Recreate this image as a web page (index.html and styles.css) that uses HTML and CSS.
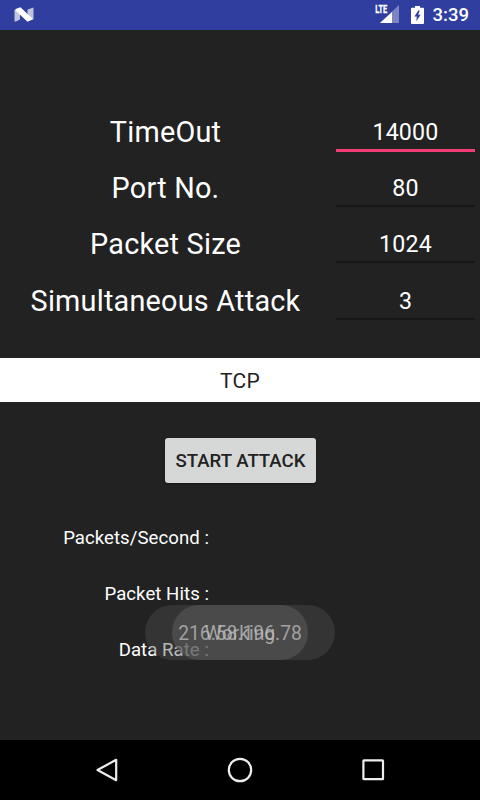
FILE: index.html
```
<!DOCTYPE html>
<html lang="en">

<head>
    <meta charset="UTF-8">
    <meta name="viewport" content="width=device-width, initial-scale=1.0">
    <title>Attack</title>
    <link rel="stylesheet" href="styles.css">
</head>

<body>
    <header class="status-bar">
        <svg class="n-logo" width="20" height="16" viewBox="0 0 20 16">
            <path d="M0.5 2.5L6 5V12.5L2 14.5H0.5zM13.5 2.5L18 1L19.5 0.5V12.5L13.5 11z" fill="#c0c3dc" />
            <path d="M1.5 2L6.5 0.2L19 12.3L13.5 14.8L1.5 3.5z" fill="#fff" />
        </svg>
        <div class="status-icons">
            <svg class="signal" width="25" height="22" viewBox="0 0 25 22">
                <path d="M24 2V20H5z" fill="#7c85c2" />
                <path d="M17 9V20H5z" fill="#fff" />
                <path d="M0 0H13V11.5H0z" fill="#303f9f" />
                <text x="0.3" y="10" textLength="12" lengthAdjust="spacingAndGlyphs">LTE</text>
            </svg>
            <svg class="battery" width="13" height="18" viewBox="0 0 13 18">
                <path d="M4 0H9V1.8H12Q13 1.8 13 2.8V17Q13 18 12 18H1Q0 18 0 17V2.8Q0 1.8 1 1.8H4z" fill="#fff" />
                <path d="M7.3 4.5L3.4 10.5H5.8L5.3 15.3L9.7 8.8H7.2L8.7 4.5z" fill="#303f9f" />
            </svg>
            <span class="clock">3:39</span>
        </div>
    </header>

    <main>
        <form class="settings">
            <label for="timeout">TimeOut</label>
            <div class="field"><input type="text" id="timeout" class="active" value="14000"></div>
            <label for="port">Port No.</label>
            <div class="field"><input type="text" id="port" value="80"></div>
            <label for="packetSize">Packet Size</label>
            <div class="field"><input type="text" id="packetSize" value="1024"></div>
            <label for="simultaneous">Simultaneous Attack</label>
            <div class="field"><input type="text" id="simultaneous" value="3"></div>
        </form>

        <div class="protocol">TCP</div>

        <button type="button" class="start">START ATTACK</button>

        <div class="stats">
            <p>Packets/Second :</p>
            <p>Packet Hits :</p>
            <p>Data Rate :</p>
        </div>

        <!-- Toasts, one fading out under the other -->
        <div class="toast toast-address"></div>
        <div class="toast toast-working"></div>
        <div class="toast-text address-text">216.58.196.78</div>
        <div class="toast-text working-text">Working</div>
    </main>

    <nav>
        <svg width="26" height="26" viewBox="0 0 26 26">
            <path d="M3.5 13L22.2 2.8V23.2z" />
        </svg>
        <svg width="26" height="26" viewBox="0 0 26 26">
            <circle cx="13" cy="13" r="11.2" />
        </svg>
        <svg width="26" height="26" viewBox="0 0 26 26">
            <rect x="3.4" y="3.4" width="19.6" height="18.8" rx="0.5" />
        </svg>
    </nav>
</body>

</html>
```

FILE: styles.css
```
* {
    box-sizing: border-box;
}

body {
    font-family: Roboto, sans-serif;
    margin: 0;
    width: 480px;
    height: 800px;
    display: flex;
    flex-direction: column;
    background-color: #222;
    color: #fff;
    overflow: hidden;
}

.status-bar {
    height: 30px;
    background-color: #303f9f;
    display: flex;
    align-items: center;
    justify-content: space-between;
    padding: 0 11px 0 14px;
}

.status-icons {
    display: flex;
    align-items: center;
}

.signal {
    margin-right: 11px;
    margin-top: -2px;
    overflow: visible;
}

.signal text {
    font-size: 11px;
    font-weight: 700;
    fill: #fff;
    stroke: #fff;
    stroke-width: 0.3;
}

.battery {
    margin-right: 9px;
}

.clock {
    font-size: 18.5px;
    font-weight: 500;
    line-height: 32px;
}

main {
    position: relative;
    height: 710px;
    display: flex;
    flex-direction: column;
    align-items: center;
}

.settings {
    width: 100%;
    margin-top: 73px;
    display: grid;
    grid-template-columns: 331px 149px;
    grid-auto-rows: 56.2px;
}

.settings label {
    font-size: 28.8px;
    letter-spacing: 0.23px;
    line-height: 58px;
    text-align: center;
}

.field {
    padding: 8px 5px 0;
}

.field input {
    width: 100%;
    height: 40px;
    padding: 4px 0 0;
    border: none;
    border-bottom: 2px solid #171717;
    background: none;
    color: #fff;
    font-family: inherit;
    font-size: 23.2px;
    letter-spacing: 0.2px;
    text-align: center;
    outline: none;
}

.field input.active {
    border-bottom: 3px solid #f43d76;
    height: 41px;
}

.protocol {
    width: 100%;
    height: 44px;
    margin-top: 30px;
    background-color: #fff;
    color: #222;
    font-size: 21px;
    letter-spacing: 0.2px;
    line-height: 46px;
    text-align: center;
}

.start {
    width: 151px;
    height: 45px;
    margin: 36px 0 0 1px;
    padding: 1px 0 0;
    border: none;
    border-radius: 3px;
    background-color: #d6d7d7;
    color: #222;
    font-family: inherit;
    font-size: 18.6px;
    font-weight: 500;
    box-shadow: 0 1px 2px rgba(0, 0, 0, 0.4);
}

.stats {
    width: 209px;
    margin-top: 27px;
    align-self: flex-start;
    text-align: right;
    font-size: 18.6px;
    letter-spacing: 0.05px;
    line-height: 56.2px;
}

.stats p {
    margin: 0;
}

.toast {
    position: absolute;
    top: 575px;
    height: 55px;
    border-radius: 28px;
}

.toast-address {
    left: 145px;
    width: 190px;
    background-color: rgba(80, 80, 80, 0.4);
}

.toast-working {
    left: 172px;
    width: 136px;
    background-color: rgba(86, 86, 86, 0.66);
}

.toast-text {
    position: absolute;
    top: 575px;
    left: 0;
    width: 480px;
    line-height: 57px;
    font-size: 19.3px;
    text-align: center;
}

.address-text {
    color: #a0a0a0;
}

.working-text {
    color: rgba(190, 190, 190, 0.8);
}

nav {
    height: 60px;
    padding: 0 94px;
    background-color: #000;
    display: flex;
    align-items: center;
    justify-content: space-between;
}

nav svg {
    fill: none;
    stroke: #eee;
    stroke-width: 2.2;
    stroke-linejoin: round;
}
```
